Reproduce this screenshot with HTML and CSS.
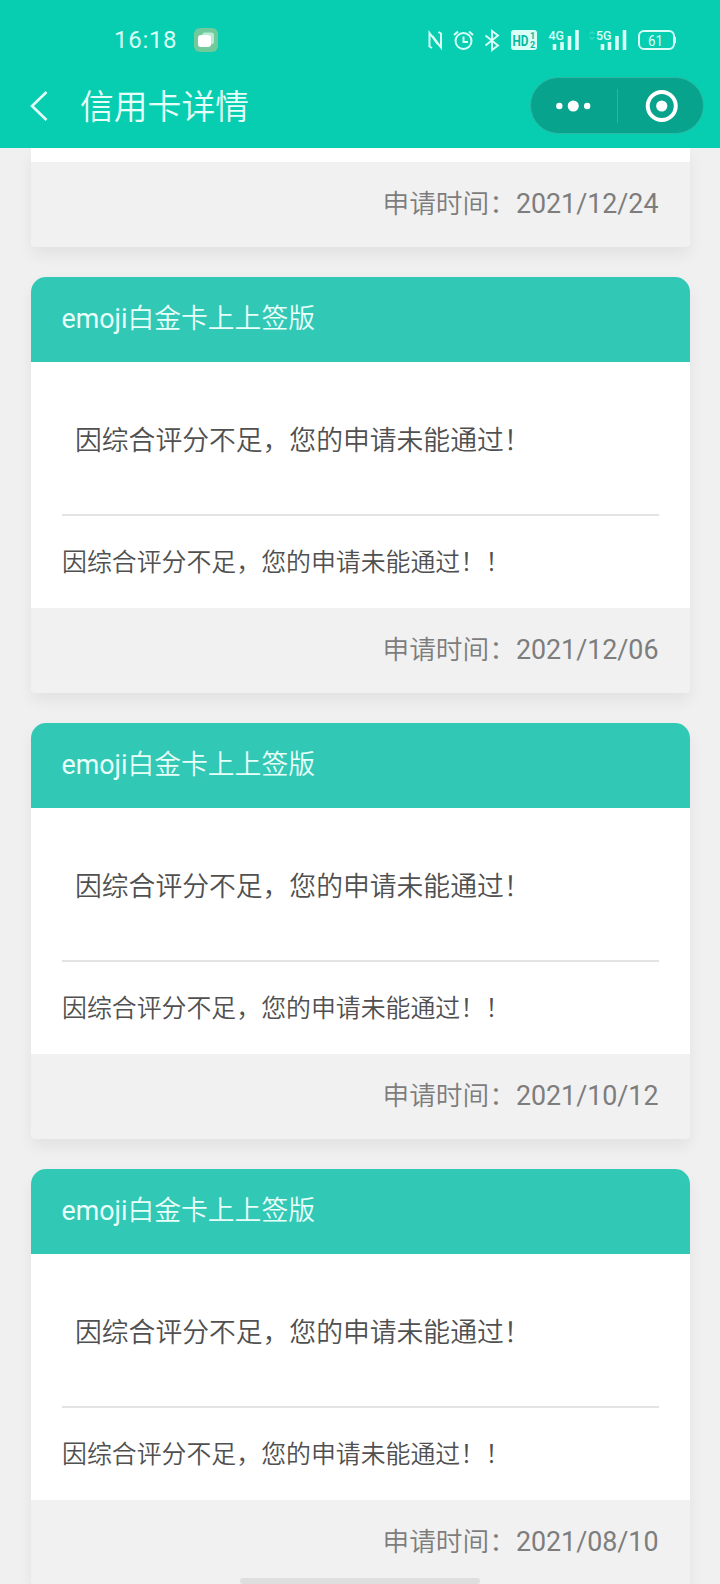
FILE: index.html
```html
<!DOCTYPE html>
<html lang="zh-CN">
<head>
<meta charset="utf-8">
<title>信用卡详情</title>
<link rel="stylesheet" href="styles.css">
</head>
<body>
<div class="screen">
  <header class="top">
    <div class="status">
      <span class="clock">16:18</span>
      <svg class="app-badge" width="24" height="24" viewBox="0 0 24 24"><rect width="24" height="24" rx="6" fill="#72ca9c"/><rect x="8" y="4.500" width="12" height="12" rx="3" fill="#b9ecd4"/><rect x="4" y="7" width="13" height="12" rx="3" fill="#fff"/></svg>
      <svg class="signals" width="256" height="40" viewBox="420 20 256 40" fill="none" stroke="#d9fff6" stroke-width="2">
        <path d="M432 48L429.500 46.500V33L438 44.500M438.500 32L441 33.500V47.500L432.500 36" stroke-width="2"/>
        <circle cx="463.500" cy="41" r="8"/>
        <path d="M463.500 36.500V42H468M454 35L458 31.500M469 31.500L473 35"/>
        <path d="M485.500 35.500L498 45.500L492 50V31L498 35.500L485.500 45.500" stroke-width="1.900"/>
        <rect x="511" y="30" width="26" height="20" rx="3" fill="#d9fff6" stroke="none"/>
        <g class="signal-text" stroke="none">
          <text class="hd" x="512.500" y="46" textLength="16" lengthAdjust="spacingAndGlyphs">HD</text>
          <text class="hd-small" x="530" y="39">1</text>
          <text class="hd-small" x="530" y="48">2</text>
          <text class="net" x="548.500" y="40" textLength="15.500" lengthAdjust="spacingAndGlyphs">4G</text>
          <text class="net" x="596" y="40" textLength="15.500" lengthAdjust="spacingAndGlyphs">5G</text>
          <text class="charge" x="648" y="45.500" textLength="15" lengthAdjust="spacingAndGlyphs">61</text>
        </g>
        <path stroke-width="3.600" d="M554.500 50V44M562 50V42M569.500 50V36M577 50V30M602.500 50V44M609.500 50V42M617 50V36M624.500 50V30"/>
        <path opacity=".25" stroke-width="1.500" d="M589.500 34L592 32L594.500 34M589.500 37L592 39L594.500 37"/>
        <rect x="639" y="31" width="35" height="18" rx="5"/>
        <path d="M676 37V43" stroke-width="2"/>
      </svg>
    </div>
    <div class="nav">
      <svg class="back" width="20" height="34" viewBox="0 0 20 34"><path d="M17.500 3L3 17L17.500 31" fill="none" stroke="#e6fff9" stroke-width="2.600"/></svg>
      <h1 class="title">信用卡详情</h1>
      <div class="capsule">
        <svg width="86" height="56" viewBox="0 0 86 56" fill="#fff"><circle cx="28.500" cy="28" r="3.200"/><circle cx="42.500" cy="28" r="5.600"/><circle cx="56.500" cy="28" r="3.200"/></svg>
        <span class="split"></span>
        <svg width="85" height="56" viewBox="0 0 85 56"><circle cx="43.500" cy="28" r="14" fill="none" stroke="#fff" stroke-width="4"/><circle cx="43.500" cy="28" r="5.600" fill="#fff"/></svg>
      </div>
    </div>
  </header>
  <main class="list">
    <article class="card card-cut">
      <div class="sliver"></div>
      <div class="card-foot">申请时间：<span class="date">2021/12/24</span></div>
    </article>
    <article class="card">
      <h2 class="card-head"><span class="latin">emoji</span>白金卡上上签版</h2>
      <p class="result">因综合评分不足，您的申请未能通过！</p>
      <p class="reason">因综合评分不足，您的申请未能通过！！</p>
      <div class="card-foot">申请时间：<span class="date">2021/12/06</span></div>
    </article>
    <article class="card">
      <h2 class="card-head"><span class="latin">emoji</span>白金卡上上签版</h2>
      <p class="result">因综合评分不足，您的申请未能通过！</p>
      <p class="reason">因综合评分不足，您的申请未能通过！！</p>
      <div class="card-foot">申请时间：<span class="date">2021/10/12</span></div>
    </article>
    <article class="card">
      <h2 class="card-head"><span class="latin">emoji</span>白金卡上上签版</h2>
      <p class="result">因综合评分不足，您的申请未能通过！</p>
      <p class="reason">因综合评分不足，您的申请未能通过！！</p>
      <div class="card-foot">申请时间：<span class="date">2021/08/10</span></div>
    </article>
  </main>
  <div class="home-bar"></div>
</div>
</body>
</html>
```
FILE: styles.css
```css
* { box-sizing: border-box; }
body {
  margin: 0;
  font-family: Roboto, "Noto Sans CJK SC", sans-serif;
  font-weight: 350;
}
h1, h2, p { margin: 0; font-weight: inherit; white-space: nowrap; }
svg { display: block; flex: none; }
.screen {
  position: relative;
  width: 720px;
  height: 1584px;
  overflow: hidden;
  background: #f0f0f0;
  display: flex;
  flex-direction: column;
}
.top { height: 148px; flex: none; background: #07ceb1; }
.status { height: 60px; padding: 20px 0 0 114px; display: flex; align-items: center; }
.clock {
  width: 80px;
  font: 400 24px/40px Roboto, sans-serif;
  letter-spacing: 0.7px;
  color: #d9fff6;
}
.signals { margin-left: 202px; }
.signal-text { font-family: Roboto, sans-serif; fill: #d9fff6; }
.hd { font-size: 15px; font-weight: 700; fill: #07b89e; }
.hd-small { font-size: 9px; font-weight: 700; fill: #07b89e; }
.net { font-size: 13px; font-weight: 500; }
.charge { font-size: 15px; font-weight: 400; }
.nav { height: 88px; padding: 3px 16px 0 29px; display: flex; align-items: center; }
.title {
  margin-left: 31px;
  padding-top: 4px;
  font-size: 33.8px;
  line-height: 48px;
  color: #e6fff9;
}
.capsule {
  width: 174px;
  height: 57px;
  margin-left: auto;
  border: 1px solid #2bb9a4;
  border-radius: 29px;
  background: #07a38d;
  display: flex;
  align-items: center;
  flex: none;
}
.capsule svg { flex: 1 1 0; min-width: 0; }
.split { width: 1px; height: 34px; background: #30b3a1; }
.list {
  flex: 1;
  min-height: 0;
  overflow: hidden;
  padding: 0 30.5px;
  display: flex;
  flex-direction: column;
  gap: 30.5px;
}
.card {
  flex: none;
  border-radius: 15px 15px 5px 5px;
  background: #fff;
  color: #505050;
  box-shadow: 0 8px 15px rgba(0, 0, 0, 0.06);
}
.card-cut { border-radius: 0 0 5px 5px; }
.sliver { height: 14px; }
.card-head {
  height: 84.5px;
  padding-left: 31px;
  border-radius: 15px 15px 0 0;
  background: #32c8b6;
  color: #e8fffa;
  font-size: 26.8px;
  line-height: 85px;
}
.latin { font-weight: 400; }
.result {
  height: 154.5px;
  margin: 0 31px;
  padding-left: 13.5px;
  border-bottom: 2px solid #e3e3e3;
  font-size: 26.8px;
  line-height: 158px;
}
.reason {
  height: 92px;
  padding-left: 31.5px;
  font-size: 24.9px;
  line-height: 93px;
}
.card-foot {
  height: 84.5px;
  padding-right: 31px;
  border-radius: 0 0 5px 5px;
  background: #f1f1f1;
  color: #7d7d7d;
  font-size: 26.7px;
  line-height: 85px;
  text-align: right;
  white-space: nowrap;
}
.date { font-size: 26.8px; font-weight: 400; }
.home-bar {
  position: absolute;
  left: 240px;
  bottom: 0;
  width: 240px;
  height: 6px;
  border-radius: 3px;
  background: #dedede;
}
```
